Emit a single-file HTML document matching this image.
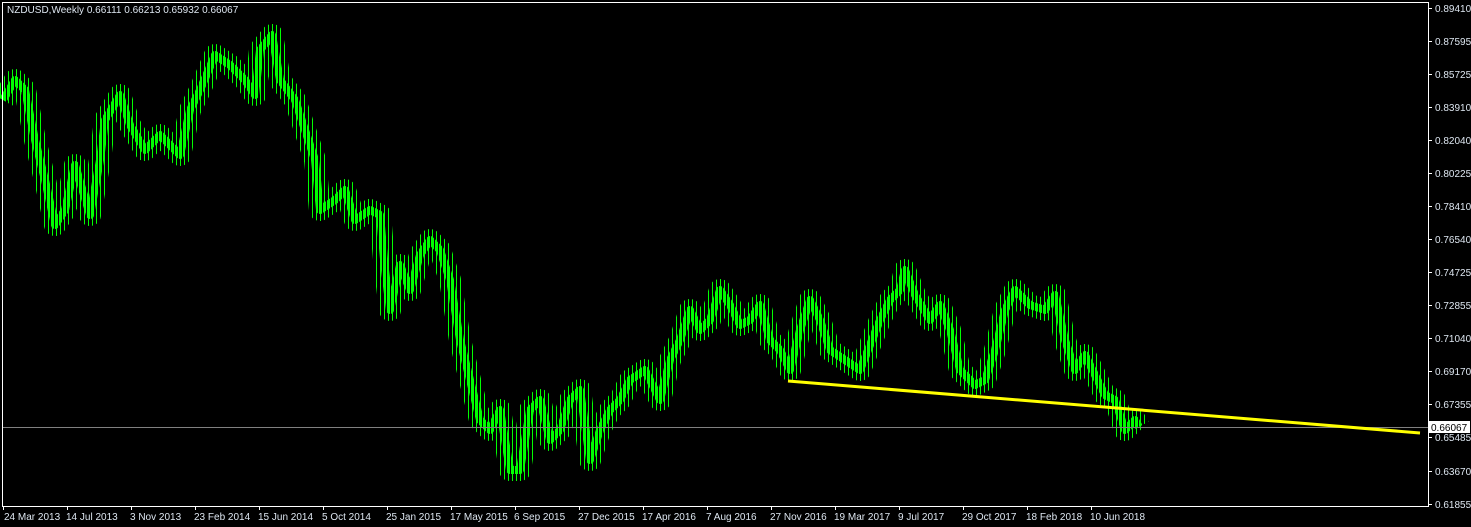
<!DOCTYPE html>
<html><head><meta charset="utf-8"><style>
html,body{margin:0;padding:0;background:#000;width:1471px;height:527px;overflow:hidden}
svg{display:block}
text{font-family:"Liberation Sans",sans-serif;font-size:10px;fill:#dde6f0}
</style></head><body>
<svg width="1471" height="527" xmlns="http://www.w3.org/2000/svg">
<defs>
<pattern id="body" patternUnits="userSpaceOnUse" x="3" y="0" width="4" height="4"><rect x="0" y="0" width="3" height="4" fill="#00ff00"/></pattern>
<pattern id="wick" patternUnits="userSpaceOnUse" x="3" y="0" width="4" height="4"><rect x="1" y="0" width="1" height="4" fill="#00ff00"/></pattern>
</defs>
<rect x="0" y="0" width="1471" height="527" fill="#000"/>
<polyline fill="none" stroke="url(#wick)" stroke-width="22" stroke-linejoin="round" points="3,100 15,80 25,90 35,140 45,180 55,225 65,210 75,165 90,215 100,160 105,120 120,95 130,125 145,150 160,135 180,155 190,110 200,90 215,55 230,65 245,80 255,95 260,50 272,35 280,80 295,100 305,130 315,160 320,210 335,200 345,190 355,220 370,210 380,215 385,270 390,310 400,265 410,290 420,255 430,240 440,250 450,280 460,340 470,380 480,420 490,430 500,410 510,470 520,470 530,410 540,400 550,440 560,430 570,400 580,390 590,460 600,430 610,410 620,400 630,380 645,370 660,400 670,360 680,340 690,310 700,330 710,320 720,290 730,305 740,325 750,320 760,305 770,340 780,350 790,370 800,330 810,300 820,320 830,350 845,360 860,370 870,345 880,320 890,300 900,290 905,270 915,295 930,320 940,305 950,330 960,370 975,385 985,380 995,350 1005,310 1015,290 1030,305 1045,310 1055,295 1065,340 1075,370 1085,355 1095,375 1105,395 1115,400 1125,430 1135,420 1139,427"/>
<polyline fill="none" stroke="url(#body)" stroke-width="8" stroke-linejoin="round" points="3,100 15,80 25,90 35,140 45,180 55,225 65,210 75,165 90,215 100,160 105,120 120,95 130,125 145,150 160,135 180,155 190,110 200,90 215,55 230,65 245,80 255,95 260,50 272,35 280,80 295,100 305,130 315,160 320,210 335,200 345,190 355,220 370,210 380,215 385,270 390,310 400,265 410,290 420,255 430,240 440,250 450,280 460,340 470,380 480,420 490,430 500,410 510,470 520,470 530,410 540,400 550,440 560,430 570,400 580,390 590,460 600,430 610,410 620,400 630,380 645,370 660,400 670,360 680,340 690,310 700,330 710,320 720,290 730,305 740,325 750,320 760,305 770,340 780,350 790,370 800,330 810,300 820,320 830,350 845,360 860,370 870,345 880,320 890,300 900,290 905,270 915,295 930,320 940,305 950,330 960,370 975,385 985,380 995,350 1005,310 1015,290 1030,305 1045,310 1055,295 1065,340 1075,370 1085,355 1095,375 1105,395 1115,400 1125,430 1135,420 1139,427"/>
<line x1="3" y1="427.5" x2="1428" y2="427.5" stroke="#808080" stroke-width="1"/>
<line x1="788" y1="381" x2="1420" y2="433" stroke="#ffff00" stroke-width="3"/>
<path d="M2.5 2.5 H1428.5 V506.5 H2.5 Z" fill="none" stroke="#fff" stroke-width="1"/>
<g stroke="#fff">
<line x1="1428" y1="8.5" x2="1432" y2="8.5"/><line x1="1428" y1="41.5" x2="1432" y2="41.5"/><line x1="1428" y1="74.5" x2="1432" y2="74.5"/><line x1="1428" y1="107.5" x2="1432" y2="107.5"/><line x1="1428" y1="140.5" x2="1432" y2="140.5"/><line x1="1428" y1="173.5" x2="1432" y2="173.5"/><line x1="1428" y1="206.5" x2="1432" y2="206.5"/><line x1="1428" y1="239.5" x2="1432" y2="239.5"/><line x1="1428" y1="272.5" x2="1432" y2="272.5"/><line x1="1428" y1="305.5" x2="1432" y2="305.5"/><line x1="1428" y1="338.5" x2="1432" y2="338.5"/><line x1="1428" y1="371.5" x2="1432" y2="371.5"/><line x1="1428" y1="404.5" x2="1432" y2="404.5"/><line x1="1428" y1="437.5" x2="1432" y2="437.5"/><line x1="1428" y1="471.5" x2="1432" y2="471.5"/><line x1="1428" y1="504.5" x2="1432" y2="504.5"/>
</g>
<g>
<text x="1435" y="12">0.89410</text><text x="1435" y="45">0.87595</text><text x="1435" y="78">0.85725</text><text x="1435" y="111">0.83910</text><text x="1435" y="144">0.82040</text><text x="1435" y="177">0.80225</text><text x="1435" y="210">0.78410</text><text x="1435" y="243">0.76540</text><text x="1435" y="276">0.74725</text><text x="1435" y="309">0.72855</text><text x="1435" y="342">0.71040</text><text x="1435" y="375">0.69170</text><text x="1435" y="408">0.67355</text><text x="1435" y="441">0.65485</text><text x="1435" y="475">0.63670</text><text x="1435" y="508">0.61855</text>
</g>
<g stroke="#fff">
<line x1="3.5" y1="506" x2="3.5" y2="510"/><line x1="67.5" y1="506" x2="67.5" y2="510"/><line x1="131.5" y1="506" x2="131.5" y2="510"/><line x1="195.5" y1="506" x2="195.5" y2="510"/><line x1="259.5" y1="506" x2="259.5" y2="510"/><line x1="323.5" y1="506" x2="323.5" y2="510"/><line x1="387.5" y1="506" x2="387.5" y2="510"/><line x1="451.5" y1="506" x2="451.5" y2="510"/><line x1="515.5" y1="506" x2="515.5" y2="510"/><line x1="579.5" y1="506" x2="579.5" y2="510"/><line x1="643.5" y1="506" x2="643.5" y2="510"/><line x1="707.5" y1="506" x2="707.5" y2="510"/><line x1="771.5" y1="506" x2="771.5" y2="510"/><line x1="835.5" y1="506" x2="835.5" y2="510"/><line x1="899.5" y1="506" x2="899.5" y2="510"/><line x1="963.5" y1="506" x2="963.5" y2="510"/><line x1="1027.5" y1="506" x2="1027.5" y2="510"/><line x1="1091.5" y1="506" x2="1091.5" y2="510"/>
</g>
<g>
<text x="4" y="520">24 Mar 2013</text><text x="66" y="520">14 Jul 2013</text><text x="130" y="520">3 Nov 2013</text><text x="194" y="520">23 Feb 2014</text><text x="258" y="520">15 Jun 2014</text><text x="322" y="520">5 Oct 2014</text><text x="386" y="520">25 Jan 2015</text><text x="450" y="520">17 May 2015</text><text x="514" y="520">6 Sep 2015</text><text x="578" y="520">27 Dec 2015</text><text x="642" y="520">17 Apr 2016</text><text x="706" y="520">7 Aug 2016</text><text x="770" y="520">27 Nov 2016</text><text x="834" y="520">19 Mar 2017</text><text x="898" y="520">9 Jul 2017</text><text x="962" y="520">29 Oct 2017</text><text x="1026" y="520">18 Feb 2018</text><text x="1090" y="520">10 Jun 2018</text>
</g>
<text x="7" y="13" style="font-size:10px">NZDUSD,Weekly  0.66111 0.66213 0.65932 0.66067</text>
<rect x="1429" y="421" width="41" height="12" fill="#fff"/>
<text x="1431" y="431" style="fill:#000">0.66067</text>
</svg>
</body></html>
